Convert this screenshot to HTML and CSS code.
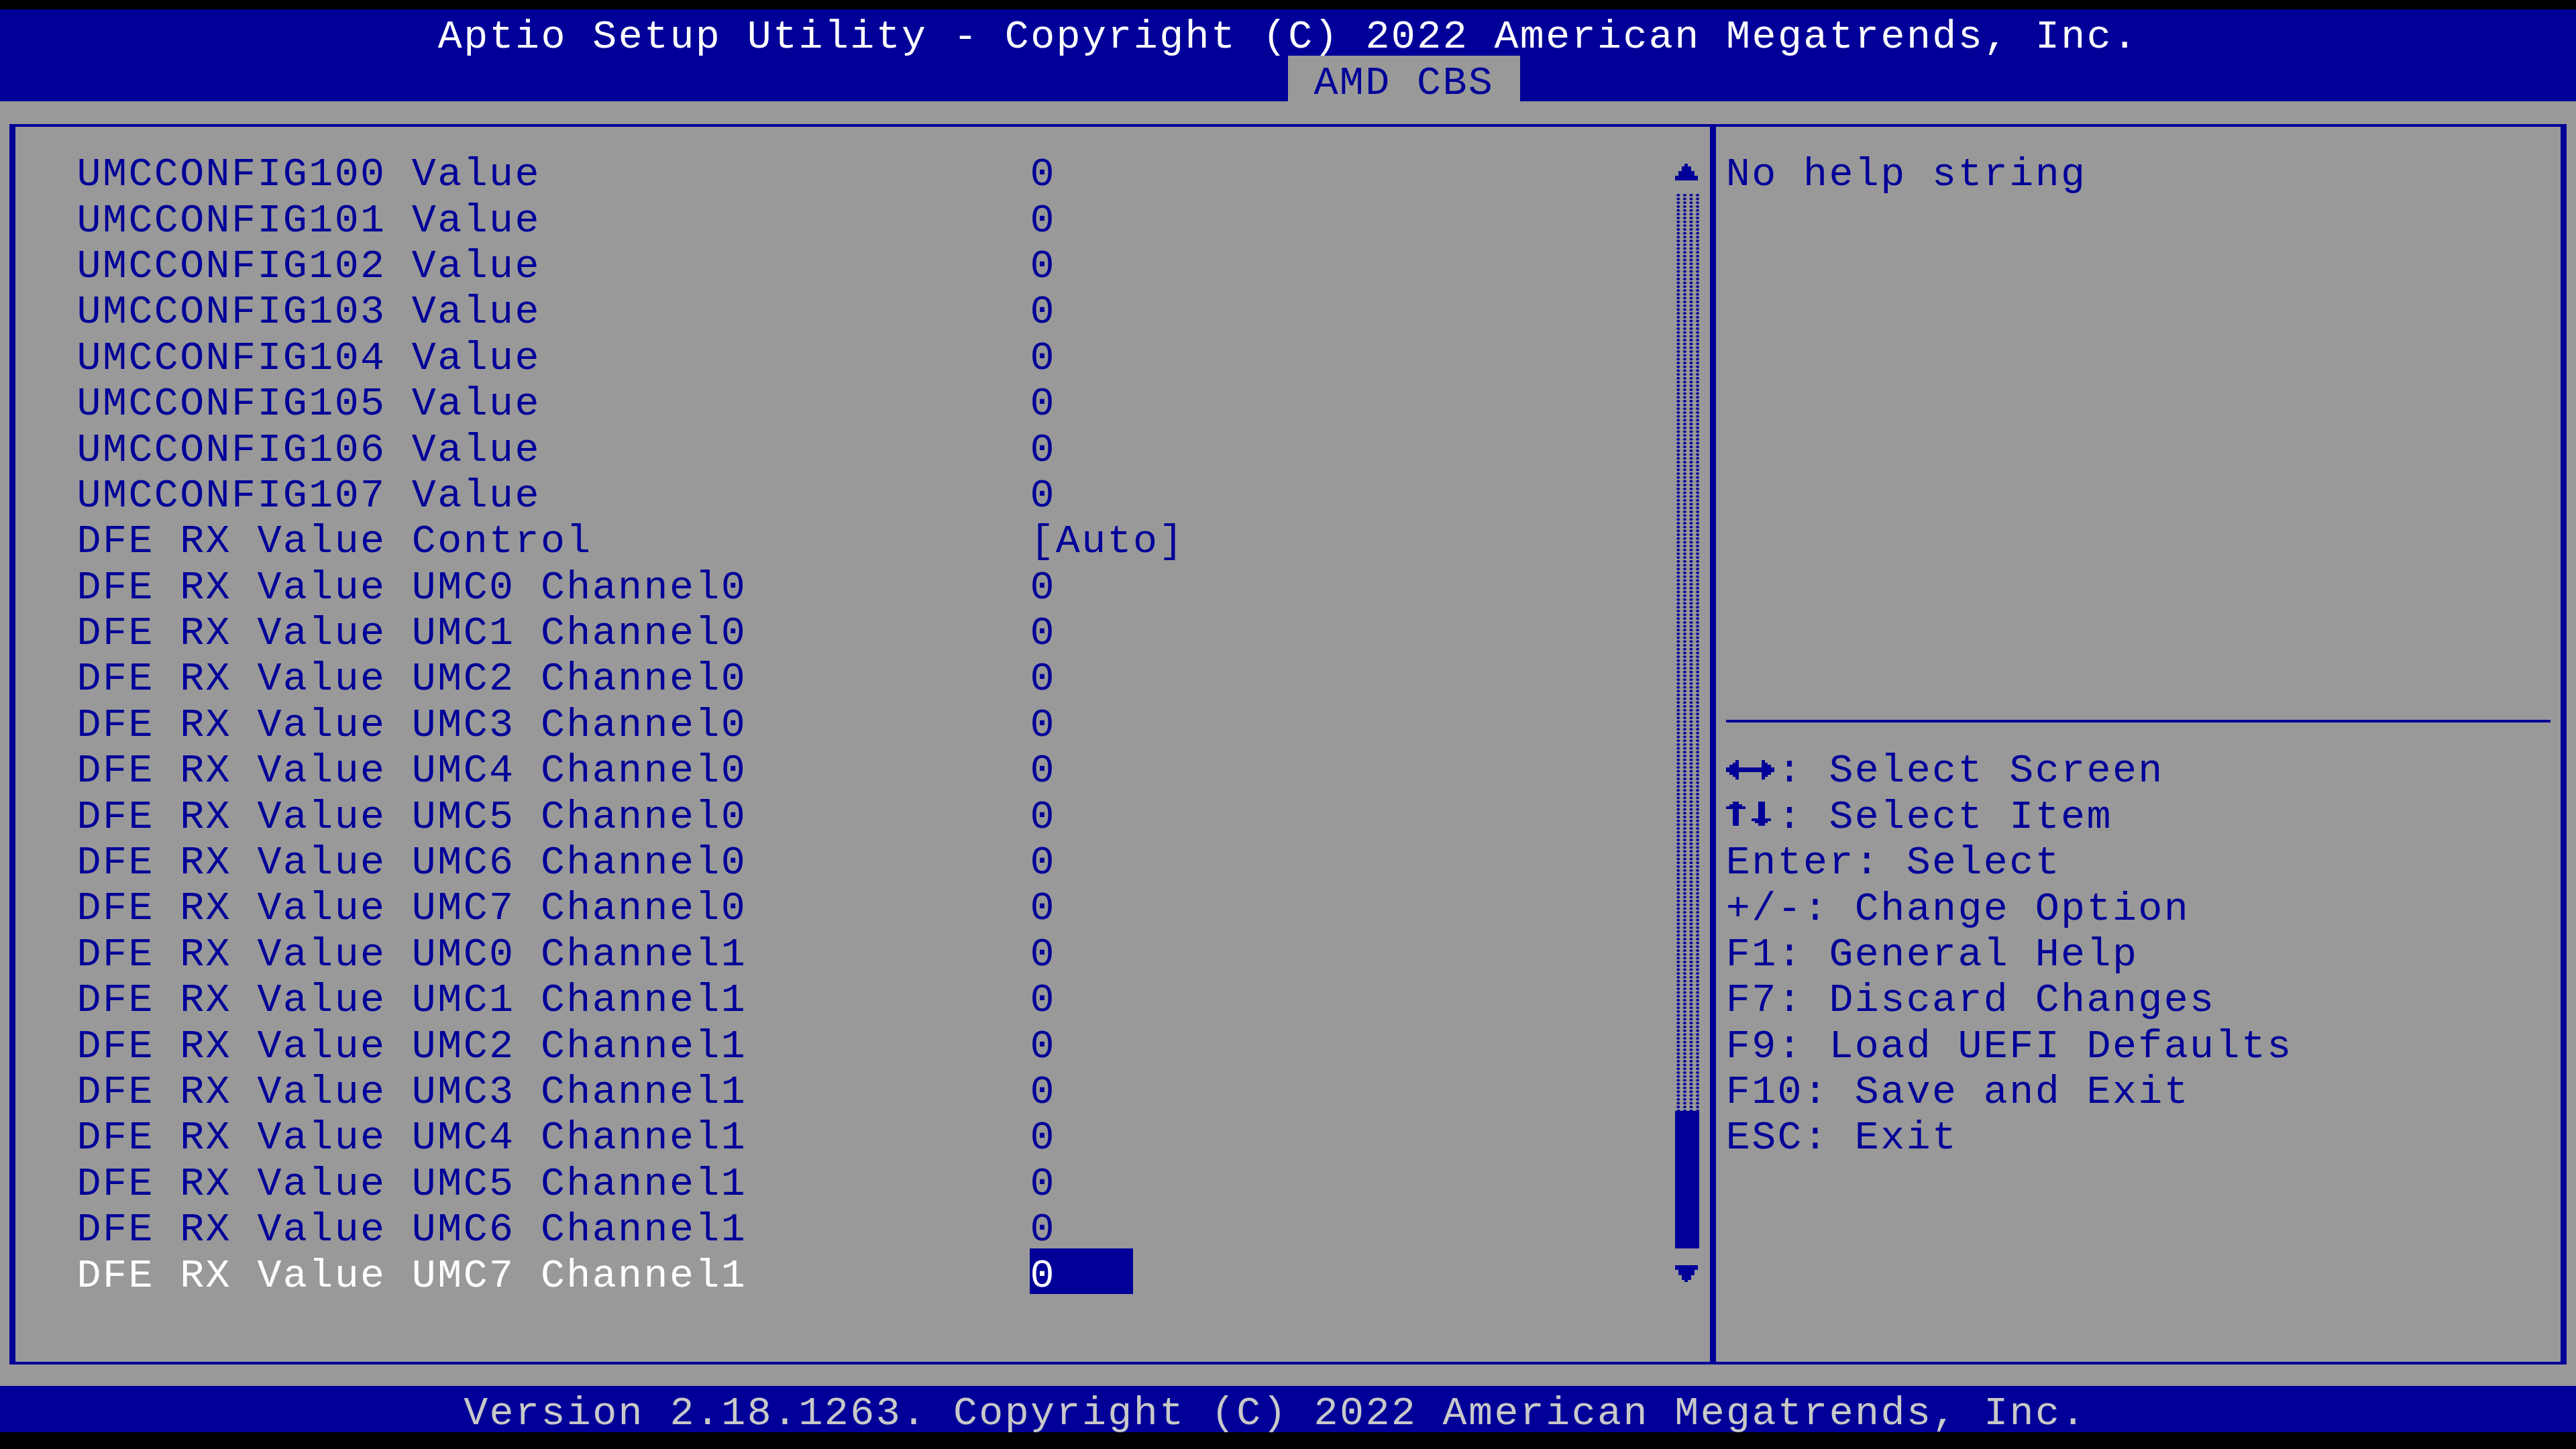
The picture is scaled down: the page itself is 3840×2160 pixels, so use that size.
FILE: index.html
```html
<!DOCTYPE html>
<html lang="en">
<head>
    <meta charset="UTF-8">
    <title>Aptio Setup Utility - AMD CBS</title>
    <link rel="stylesheet" href="styles.css">
</head>
<body>
    <div class="screen">
        <header class="top">
            <div class="row title">Aptio Setup Utility - Copyright (C) 2022 American Megatrends, Inc.</div>
            <div class="row tabs"><span class="tab">AMD CBS</span></div>
        </header>

        <main class="main">
            <div class="frame">
                <section class="left">
                    <ul class="items">
                        <li class="row item"><span class="label">UMCCONFIG100 Value</span><span class="value">0</span></li>
                        <li class="row item"><span class="label">UMCCONFIG101 Value</span><span class="value">0</span></li>
                        <li class="row item"><span class="label">UMCCONFIG102 Value</span><span class="value">0</span></li>
                        <li class="row item"><span class="label">UMCCONFIG103 Value</span><span class="value">0</span></li>
                        <li class="row item"><span class="label">UMCCONFIG104 Value</span><span class="value">0</span></li>
                        <li class="row item"><span class="label">UMCCONFIG105 Value</span><span class="value">0</span></li>
                        <li class="row item"><span class="label">UMCCONFIG106 Value</span><span class="value">0</span></li>
                        <li class="row item"><span class="label">UMCCONFIG107 Value</span><span class="value">0</span></li>
                        <li class="row item"><span class="label">DFE RX Value Control</span><span class="value">[Auto]</span></li>
                        <li class="row item"><span class="label">DFE RX Value UMC0 Channel0</span><span class="value">0</span></li>
                        <li class="row item"><span class="label">DFE RX Value UMC1 Channel0</span><span class="value">0</span></li>
                        <li class="row item"><span class="label">DFE RX Value UMC2 Channel0</span><span class="value">0</span></li>
                        <li class="row item"><span class="label">DFE RX Value UMC3 Channel0</span><span class="value">0</span></li>
                        <li class="row item"><span class="label">DFE RX Value UMC4 Channel0</span><span class="value">0</span></li>
                        <li class="row item"><span class="label">DFE RX Value UMC5 Channel0</span><span class="value">0</span></li>
                        <li class="row item"><span class="label">DFE RX Value UMC6 Channel0</span><span class="value">0</span></li>
                        <li class="row item"><span class="label">DFE RX Value UMC7 Channel0</span><span class="value">0</span></li>
                        <li class="row item"><span class="label">DFE RX Value UMC0 Channel1</span><span class="value">0</span></li>
                        <li class="row item"><span class="label">DFE RX Value UMC1 Channel1</span><span class="value">0</span></li>
                        <li class="row item"><span class="label">DFE RX Value UMC2 Channel1</span><span class="value">0</span></li>
                        <li class="row item"><span class="label">DFE RX Value UMC3 Channel1</span><span class="value">0</span></li>
                        <li class="row item"><span class="label">DFE RX Value UMC4 Channel1</span><span class="value">0</span></li>
                        <li class="row item"><span class="label">DFE RX Value UMC5 Channel1</span><span class="value">0</span></li>
                        <li class="row item"><span class="label">DFE RX Value UMC6 Channel1</span><span class="value">0</span></li>
                        <li class="row item selected"><span class="label">DFE RX Value UMC7 Channel1</span><span class="value">0</span></li>
                    </ul>

                    <div class="scroll">
                        <svg class="cell-icon" viewBox="0 0 8 19" preserveAspectRatio="none">
                            <path d="M3 7h1v1h1v2h1v2h1v2H0v-2h1v-2h1V8h1z" />
                        </svg>
                        <div class="track"></div>
                        <div class="thumb"></div>
                        <svg class="cell-icon" viewBox="0 0 8 19" preserveAspectRatio="none">
                            <path d="M0 7h7v2H6v2H5v2H4v1H3v-1H2v-2H1V9H0z" />
                        </svg>
                    </div>
                </section>

                <aside class="right">
                    <div class="help">No help string</div>
                    <div class="sep"></div>
                    <ul class="keys">
                        <li class="row"><svg class="key-icon" viewBox="0 0 16 19" preserveAspectRatio="none">
                            <path d="M0 10h1V9h1V8h1V7h1v3h7V7h1v1h1v1h1v1h1v2h-1v1h-1v1h-1v1h-1v-3H4v3H3v-1H2v-1H1v-1H0z" />
                        </svg>: Select Screen</li>
                        <li class="row"><svg class="key-icon" viewBox="0 0 16 19" preserveAspectRatio="none">
                            <path d="M2 5h2v1h1v1h1v1H4v7H2V8H0V7h1V6h1z" />
                            <path d="M10 5h2v7h2v1h-1v1h-1v1h-2v-1H9v-1H8v-1h2z" />
                        </svg>: Select Item</li>
                        <li class="row">Enter: Select</li>
                        <li class="row">+/-: Change Option</li>
                        <li class="row">F1: General Help</li>
                        <li class="row">F7: Discard Changes</li>
                        <li class="row">F9: Load UEFI Defaults</li>
                        <li class="row">F10: Save and Exit</li>
                        <li class="row">ESC: Exit</li>
                    </ul>
                </aside>
            </div>
        </main>

        <footer class="row bottom">Version 2.18.1263. Copyright (C) 2022 American Megatrends, Inc.</footer>
    </div>
</body>
</html>
```

FILE: styles.css
```css
/* text-mode grid: 100 columns, 19px rows stretched to the screen */
:root {
    --cw: 38.4px;
    --rh: 68.4px;
    --blue: #000098;
    --grey: #999999;
}
body {
    margin: 0;
    background-color: #000;
    font-family: 'Liberation Mono', 'DejaVu Sans Mono', monospace;
    font-size: 60px;
    letter-spacing: 2.4px;
    color: var(--blue);
}
ul {
    list-style: none;
    margin: 0;
    padding: 0;
}
.screen {
    width: 3840px;
    height: 2160px;
    padding-top: 14.4px;
    box-sizing: border-box;
}
.row {
    height: var(--rh);
    line-height: 82px;
    white-space: pre;
}

/* title bar + tab strip */
.top {
    background-color: var(--blue);
    color: #fff;
}
.title {
    padding-left: calc(var(--cw) * 17);
}
.tabs {
    padding-left: calc(var(--cw) * 50);
}
.tab {
    display: inline-block;
    height: var(--rh);
    padding: 0 var(--cw);
    background-color: var(--grey);
    color: var(--blue);
}

/* grey work area with the box frame */
.main {
    height: calc(var(--rh) * 28);
    background-color: var(--grey);
    padding: 33.8px 14.4px 32.4px;
    box-sizing: border-box;
}
.frame {
    height: 100%;
    display: flex;
    border: solid var(--blue);
    border-width: 4.4px 9.6px;
    box-sizing: border-box;
}
.left {
    flex: 1;
    display: flex;
}
.items {
    flex: 1;
    padding-top: 30.2px;
    padding-left: calc(var(--cw) * 3 - 24px);
}
.item {
    display: flex;
}
.label {
    width: calc(var(--cw) * 37);
}
.value {
    height: var(--rh);
}
.selected .label {
    color: #fff;
}
.selected .value {
    width: calc(var(--cw) * 4);
    background-color: var(--blue);
    color: #fff;
}

/* scroll bar in column 65 */
.scroll {
    width: 36px;
    margin-right: 16.8px;
    padding-top: 30.2px;
    display: flex;
    flex-direction: column;
}
.cell-icon {
    display: block;
    width: var(--cw);
    height: var(--rh);
    fill: var(--blue);
    shape-rendering: crispEdges;
}
.track {
    height: calc(var(--rh) * 20);
    background-image: radial-gradient(3px 2.2px at 50% 50%, var(--blue) 70%, transparent 100%);
    background-size: 9.6px 5.7px;
    background-position: 0 0;
}
.thumb {
    height: calc(var(--rh) * 3);
    background-color: var(--blue);
}

/* help pane */
.right {
    width: 1267.2px;
    border-left: 9.6px solid var(--blue);
    padding: 30.2px 14.4px 0;
    box-sizing: border-box;
}
.help {
    height: calc(var(--rh) * 12);
    line-height: 82px;
}
.sep {
    height: var(--rh);
    display: flex;
    align-items: center;
}
.sep::before {
    content: "";
    flex: 1;
    height: 4.6px;
    margin-top: 2px;
    background-color: var(--blue);
}
.key-icon {
    display: inline-block;
    vertical-align: top;
    width: calc(var(--cw) * 2);
    height: var(--rh);
    fill: var(--blue);
    shape-rendering: crispEdges;
}

.bottom {
    padding-left: calc(var(--cw) * 18);
    background-color: var(--blue);
    color: #c8c8c8;
}
```
